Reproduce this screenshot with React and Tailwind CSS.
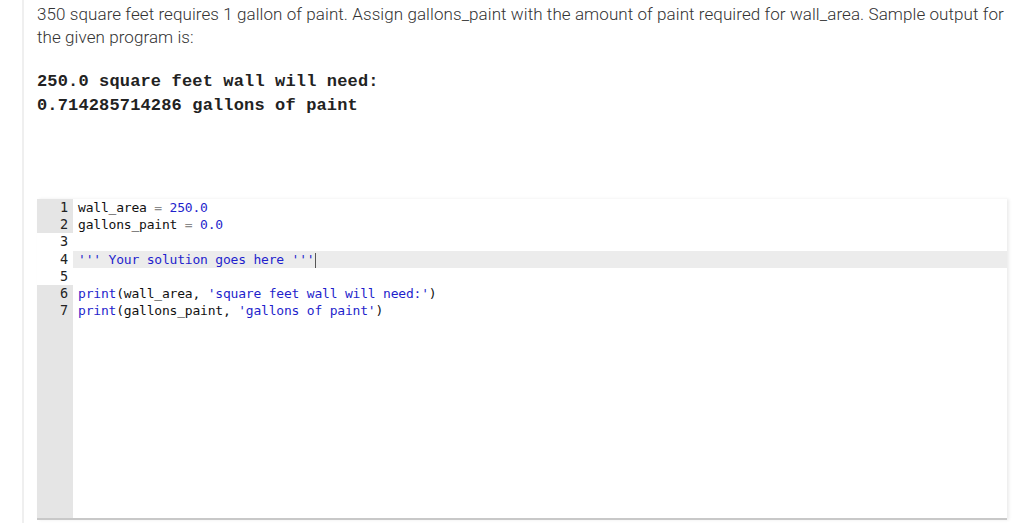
const lines = [
  { n: 1, gray: true, parts: [["wall_area ", "k"], ["=", "o"], [" ", "k"], ["250.0", "b"]] },
  { n: 2, gray: true, parts: [["gallons_paint ", "k"], ["=", "o"], [" ", "k"], ["0.0", "b"]] },
  { n: 3, gray: false, parts: [] },
  { n: 4, gray: false, active: true, parts: [["''' Your solution goes here '''", "b"]] },
  { n: 5, gray: false, parts: [] },
  { n: 6, gray: true, parts: [["print", "b"], ["(wall_area, ", "k"], ["'square feet wall will need:'", "b"], [")", "k"]] },
  { n: 7, gray: true, parts: [["print", "b"], ["(gallons_paint, ", "k"], ["'gallons of paint'", "b"], [")", "k"]] },
];

const colors = {
  k: "text-[#111111]",
  o: "text-[#8a8a8a]",
  b: "text-[#1f1fcc]",
};

function CodeLine({ line }) {
  return (
    <div className="flex h-[17.2px] leading-[17.2px]">
      <div
        className={
          "w-[36px] shrink-0 pr-[5px] text-right text-[#222] text-[13.5px]" +
          (line.gray ? " bg-[#e5e5e5]" : " bg-white")
        }
      >
        {line.n}
      </div>
      <div className={"flex-1 pl-[5px] whitespace-pre" + (line.active ? " bg-[#ececec]" : "")}>
        {line.parts.map(([t, c], i) => (
          <span key={i} className={colors[c]}>
            {t}
          </span>
        ))}
        {line.active && (
          <span className="inline-block w-px h-[15px] align-middle bg-[#555] ml-px" />
        )}
      </div>
    </div>
  );
}

export default function App() {
  return (
    <div className="w-full h-[523px] bg-white overflow-hidden">
      <div className="ml-[22px] h-full border-l-2 border-[#efefef] pl-[13px] pt-[3px]">
        <p
          className="text-[17px] leading-[23px] font-light text-[#333] pr-[8px] tracking-[0.08px]"
          style={{ fontFamily: "Roboto, 'Liberation Sans', sans-serif" }}
        >
          350 square feet requires 1 gallon of paint. Assign gallons_paint with the amount of paint required for wall_area. Sample output for the given program is:
        </p>
        <pre
          className="mt-[21px] text-[17px] leading-[24px] font-bold text-[#222] tracking-[0.15px]"
          style={{ fontFamily: "'Liberation Mono', 'Courier New', monospace" }}
        >
          {"250.0 square feet wall will need:\n0.714285714286 gallons of paint"}
        </pre>
        <div
          className="mt-[81px] w-[970px] h-[321px] flex flex-col bg-white border-b-2 border-[#c8c8c8] shadow-[2px_0_3px_rgba(0,0,0,0.08)] text-[13px] tracking-[-0.2px]"
          style={{ fontFamily: "'DejaVu Sans Mono', Menlo, monospace" }}
        >
          {lines.map((l) => (
            <CodeLine key={l.n} line={l} />
          ))}
          <div className="flex flex-1">
            <div className="w-[36px] bg-[#e5e5e5]" />
            <div className="flex-1" />
          </div>
        </div>
      </div>
    </div>
  );
}
